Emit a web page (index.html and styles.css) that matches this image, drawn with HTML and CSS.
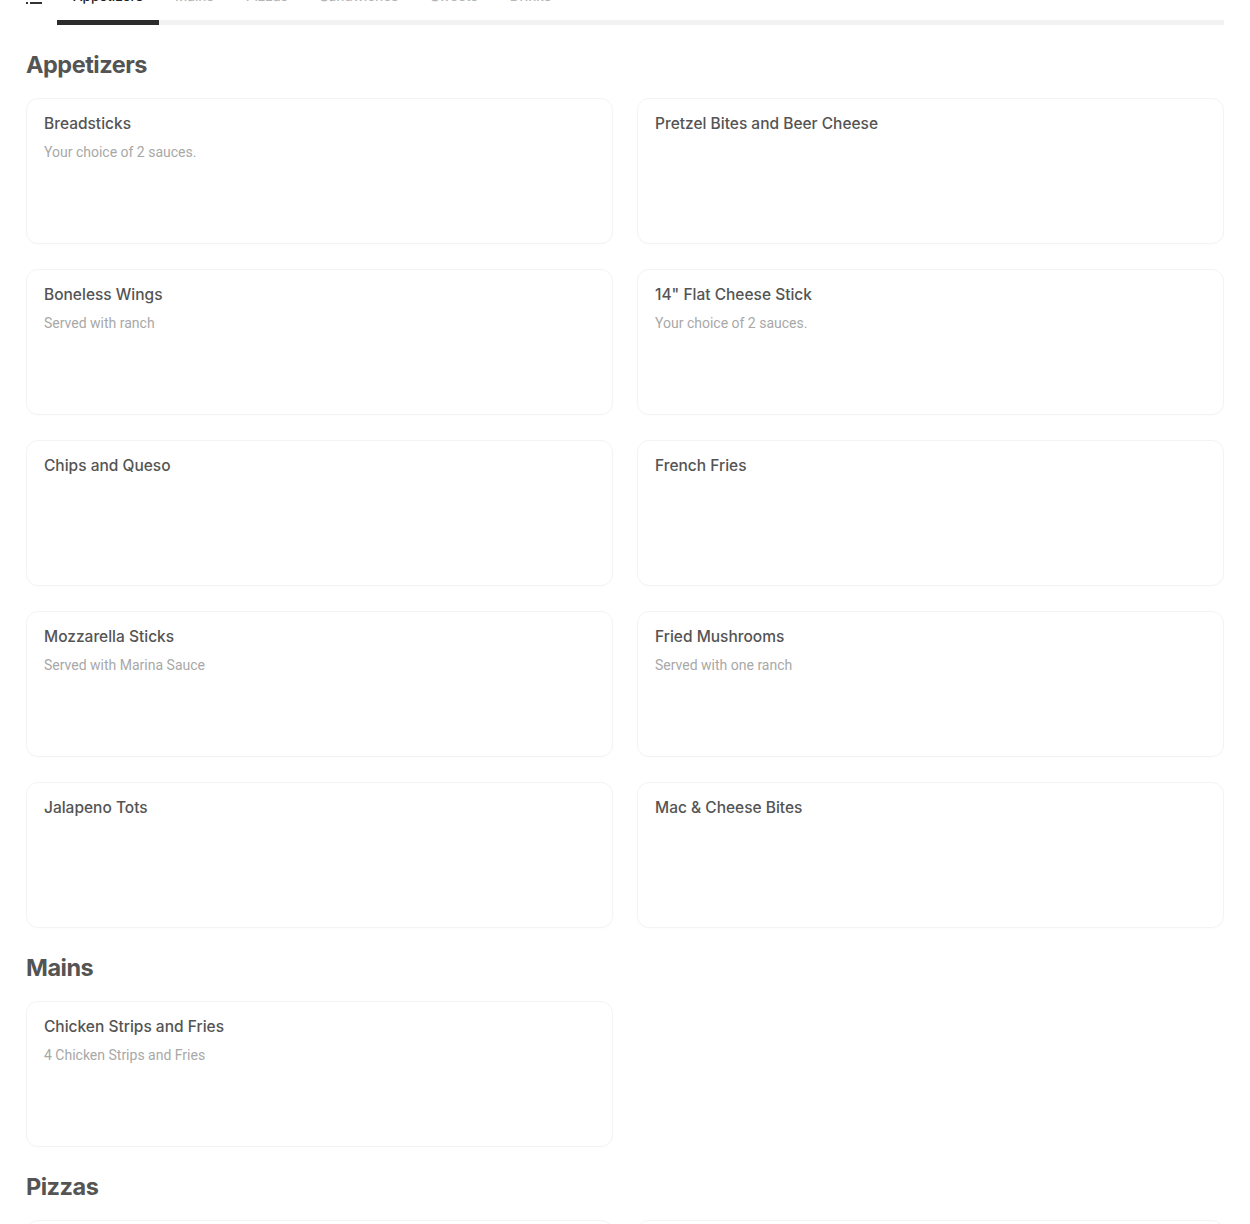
FILE: index.html
```html
<!DOCTYPE html>
<html lang="en">
<head>
    <meta charset="UTF-8">
    <meta name="viewport" content="width=device-width, initial-scale=1.0">
    <title>Menu</title>
    <link rel="stylesheet" href="styles.css">
</head>
<body>
    <div class="page">
        <nav class="menu-nav">
            <span class="menu-icon">
                <svg width="16" height="16" viewBox="0 0 16 16">
                    <rect x="0" y="2" width="2" height="2" fill="#333"/>
                    <rect x="4" y="2" width="12" height="2" fill="#333"/>
                    <rect x="0" y="7" width="2" height="2" fill="#333"/>
                    <rect x="4" y="7" width="12" height="2" fill="#333"/>
                    <rect x="0" y="12" width="2" height="2" fill="#333"/>
                    <rect x="4" y="12" width="12" height="2" fill="#333"/>
                </svg>
            </span>
            <ul class="tabs">
                <li class="tab active">Appetizers</li>
                <li class="tab">Mains</li>
                <li class="tab">Pizzas</li>
                <li class="tab">Sandwiches</li>
                <li class="tab">Sweets</li>
                <li class="tab">Drinks</li>
            </ul>
        </nav>

        <section class="menu-section">
            <h2 class="section-title">Appetizers</h2>
            <div class="item-grid">
                <div class="item-card">
                    <h3 class="item-name">Breadsticks</h3>
                    <p class="item-desc">Your choice of 2 sauces.</p>
                </div>
                <div class="item-card">
                    <h3 class="item-name">Pretzel Bites and Beer Cheese</h3>
                </div>
                <div class="item-card">
                    <h3 class="item-name">Boneless Wings</h3>
                    <p class="item-desc">Served with ranch</p>
                </div>
                <div class="item-card">
                    <h3 class="item-name">14" Flat Cheese Stick</h3>
                    <p class="item-desc">Your choice of 2 sauces.</p>
                </div>
                <div class="item-card">
                    <h3 class="item-name">Chips and Queso</h3>
                </div>
                <div class="item-card">
                    <h3 class="item-name">French Fries</h3>
                </div>
                <div class="item-card">
                    <h3 class="item-name">Mozzarella Sticks</h3>
                    <p class="item-desc">Served with Marina Sauce</p>
                </div>
                <div class="item-card">
                    <h3 class="item-name">Fried Mushrooms</h3>
                    <p class="item-desc">Served with one ranch</p>
                </div>
                <div class="item-card">
                    <h3 class="item-name">Jalapeno Tots</h3>
                </div>
                <div class="item-card">
                    <h3 class="item-name">Mac &amp; Cheese Bites</h3>
                </div>
            </div>
        </section>

        <section class="menu-section">
            <h2 class="section-title">Mains</h2>
            <div class="item-grid">
                <div class="item-card">
                    <h3 class="item-name">Chicken Strips and Fries</h3>
                    <p class="item-desc">4 Chicken Strips and Fries</p>
                </div>
            </div>
        </section>

        <section class="menu-section">
            <h2 class="section-title">Pizzas</h2>
            <div class="item-grid">
                <div class="item-card">
                    <h3 class="item-name">Pepperoni</h3>
                </div>
                <div class="item-card">
                    <h3 class="item-name">Cheese</h3>
                </div>
            </div>
        </section>
    </div>
</body>
</html>
```

FILE: styles.css
```css
body {
    margin: 0;
    background: #ffffff;
    font-family: 'Inter', 'Roboto', sans-serif;
    color: #545454;
    overflow: hidden;
}

.page {
    padding: 0 26px;
}

/* Category navigation, scrolled partly out of view */
.menu-nav {
    display: flex;
    align-items: flex-start;
    margin-top: -20px;
}

.menu-icon {
    width: 31px;
    display: flex;
    padding-top: 10px;
}

.tabs {
    display: flex;
    flex: 1;
    list-style: none;
    margin: 0;
    padding: 0;
    border-bottom: 5px solid #f2f2f2;
}

.tab {
    padding: 6px 16px 14px;
    font-size: 13.5px;
    line-height: 20px;
    font-weight: 500;
    color: #b5b5b5;
    margin-bottom: -5px;
    border-bottom: 5px solid transparent;
}

.tab.active {
    color: #222;
    border-bottom-color: #2b2b2b;
}

.menu-section {
    padding-top: 24px;
}

.section-title {
    margin: 0 0 17px;
    font-size: 23.5px;
    line-height: 32px;
    font-weight: 700;
    letter-spacing: -0.5px;
    color: #545454;
}

.item-grid {
    display: grid;
    grid-template-columns: 1fr 1fr;
    column-gap: 24px;
    row-gap: 25px;
}

.item-card {
    height: 146px;
    box-sizing: border-box;
    border: 1px solid #f3f3f3;
    border-radius: 12px;
    padding: 14px 17px;
    box-shadow: 0 1px 2px rgba(0, 0, 0, 0.015);
}

.item-name {
    margin: 0;
    font-size: 15.5px;
    line-height: 22px;
    font-weight: 500;
    color: #545454;
}

.item-desc {
    margin: 8px 0 0;
    font-family: 'Roboto', sans-serif;
    font-size: 14px;
    line-height: 18px;
    color: #a8a8a8;
}
```
